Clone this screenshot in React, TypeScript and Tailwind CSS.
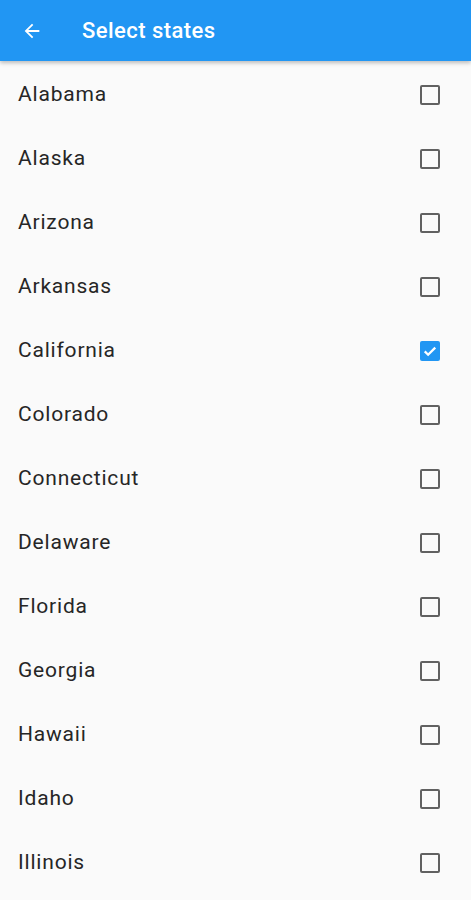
import React, { useState } from 'react';

const STATES = [
  'Alabama',
  'Alaska',
  'Arizona',
  'Arkansas',
  'California',
  'Colorado',
  'Connecticut',
  'Delaware',
  'Florida',
  'Georgia',
  'Hawaii',
  'Idaho',
  'Illinois',
];

export default function App() {
  const [checked, setChecked] = useState<Record<string, boolean>>({ California: true });

  return (
    <div className="h-[900px] overflow-hidden bg-[#fafafa] font-['Roboto',sans-serif]">
      {/* App bar */}
      <div className="relative z-10 flex h-[61px] items-center bg-[#2196f3] shadow-[0_2px_4px_rgba(0,0,0,0.25)]">
        <button className="ml-[18px] flex h-7 w-7 items-center justify-center text-white" aria-label="Back">
          <svg viewBox="0 0 24 24" className="h-[22px] w-[22px]" fill="currentColor">
            <path d="M20 11H7.83l5.59-5.59L12 4l-8 8 8 8 1.41-1.41L7.83 13H20v-2z" />
          </svg>
        </button>
        <h1 className="ml-[36px] text-[22px] font-medium tracking-[0.45px] text-white">Select states</h1>
      </div>

      {/* List */}
      <ul className="pt-[2px]">
        {STATES.map((s) => {
          const on = !!checked[s];
          return (
            <li
              key={s}
              className="flex h-[64px] items-center justify-between pl-[18px] pr-[31px]"
              onClick={() => setChecked((c) => ({ ...c, [s]: !c[s] }))}
            >
              <span className="text-[21px] tracking-[0.8px] text-[#262626]">{s}</span>
              {on ? (
                <span className="-mt-px flex h-[20px] w-[20px] items-center justify-center rounded-[2px] bg-[#2196f3]">
                  <svg viewBox="0 0 24 24" className="h-[18px] w-[18px]" fill="none" stroke="white" strokeWidth="3">
                    <path d="M5 12.5l4.5 4.5L19 7.5" />
                  </svg>
                </span>
              ) : (
                <span className="-mt-px h-[20px] w-[20px] rounded-[2px] border-2 border-[#616161]" />
              )}
            </li>
          );
        })}
      </ul>
    </div>
  );
}
